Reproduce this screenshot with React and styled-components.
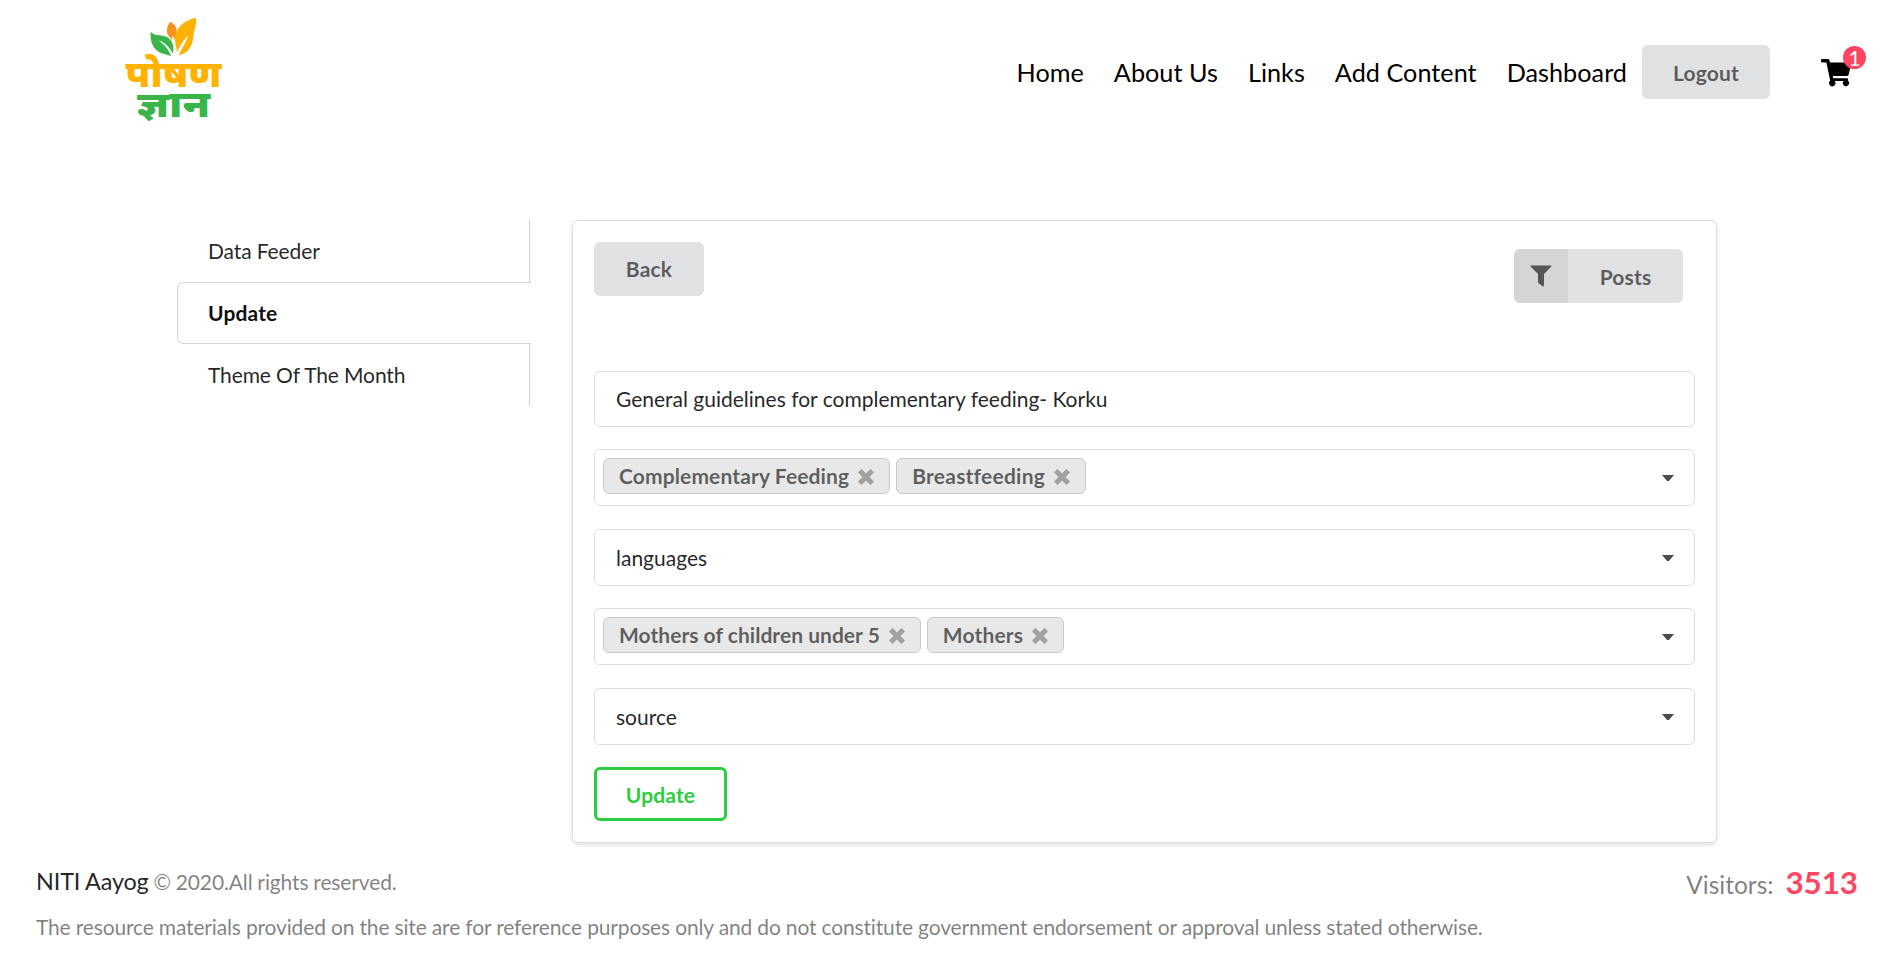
import React from "react";
import styled, { createGlobalStyle } from "styled-components";

const GlobalStyle = createGlobalStyle`
  *, *::before, *::after { box-sizing: border-box; }
  body {
    margin: 0;
    background: #fff;
    color: rgba(0, 0, 0, 0.87);
    font-family: Lato, "Noto Sans", sans-serif;
    font-size: 21px;
    font-variant-ligatures: none;
    line-height: 30px;
  }
`;

const Page = styled.div`
  height: 964px;
  overflow: hidden;
`;

const Header = styled.header`
  display: flex;
  align-items: flex-start;
  justify-content: space-between;
  height: 220px;
  padding: 0 28px 0 125px;
`;

const Logo = styled.svg`
  display: block;
  width: 97px;
  height: 110px;
  margin-top: 14px;
  overflow: visible;
`;

const Nav = styled.nav`
  display: flex;
  align-items: center;
  margin-top: 45px;
  height: 54px;
`;

const NavLink = styled.a`
  color: #000;
  font-size: 25.2px;
  letter-spacing: 0.04px;
  margin-right: ${(p) => (p.$last ? 15 : 30)}px;
  white-space: nowrap;
`;

const Button = styled.button`
  display: inline-flex;
  align-items: center;
  justify-content: center;
  height: 54px;
  width: ${(p) => p.$width}px;
  padding: 0 0 ${(p) => p.$lift || 0}px;
  border: 0;
  border-radius: 6px;
  background: #e0e1e2;
  color: rgba(0, 0, 0, 0.6);
  font: 700 21px/21px Lato, sans-serif;
  letter-spacing: 0.15px;
  overflow: hidden;
`;

const OutlineButton = styled(Button)`
  border: 3px solid #2ecc40;
  background: #fff;
  color: #2ecc40;
`;

const ButtonIcon = styled.span`
  display: flex;
  align-items: center;
  justify-content: center;
  width: 54px;
  height: 54px;
  background: rgba(0, 0, 0, 0.05);
`;

const ButtonLabel = styled.span`
  flex: 1;
  text-align: center;
`;

const FilterIcon = styled.svg`
  width: 22px;
  height: 22px;
  fill: currentColor;
`;

const Cart = styled.div`
  position: relative;
  width: 45px;
  height: 28px;
  margin: 1px 0 0 51px;
  color: #000;
`;

const CartIcon = styled.svg`
  display: block;
  width: 31px;
  height: 28px;
  fill: currentColor;
`;

const Badge = styled.span`
  position: absolute;
  left: 22px;
  top: -13px;
  width: 23px;
  height: 23px;
  border-radius: 50%;
  background: #ff4560;
  color: #fff;
  font-size: 21px;
  line-height: 24px;
  text-align: center;
`;

const Main = styled.main`
  display: flex;
  align-items: flex-start;
  padding-left: 177px;
`;

const Menu = styled.ul`
  width: 353px;
  margin: 0 42px 0 0;
  padding: 0;
  list-style: none;
  border-right: 1px solid #d4d4d5;
`;

const MenuItem = styled.li`
  height: 62px;
  padding-left: 30px;
  border: 1px solid ${(p) => (p.$active ? "#d4d4d5" : "transparent")};
  border-right: 0;
  border-radius: 6px 0 0 6px;
  margin-right: ${(p) => (p.$active ? -2 : 0)}px;
  background: ${(p) => (p.$active ? "#fff" : "none")};
  color: ${(p) => (p.$active ? "rgba(0,0,0,.95)" : "rgba(0,0,0,.87)")};
  font-weight: ${(p) => (p.$active ? 700 : 400)};
  letter-spacing: ${(p) => (p.$active ? 0.15 : -0.12)}px;
  line-height: 59px;
`;

const Card = styled.section`
  width: 1145px;
  height: 623px;
  padding: 21px;
  border: 1px solid rgba(34, 36, 38, 0.15);
  border-radius: 6px;
  box-shadow: 0 2px 4px 0 rgba(34, 36, 38, 0.14);
`;

const CardTop = styled.div`
  display: flex;
  align-items: flex-start;
  justify-content: space-between;
  height: 129px;
  padding-right: 12px;
`;

const PostsSlot = styled.div`
  margin-top: 7px;
`;

const Field = styled.div`
  display: flex;
  align-items: center;
  height: ${(p) => p.$height || 57}px;
  margin-bottom: ${(p) => p.$gap}px;
  padding: 0 20px 0 ${(p) => (p.$tags ? 8 : 21)}px;
  border: 1px solid rgba(34, 36, 38, 0.15);
  border-radius: 6px;
`;

const FieldValue = styled.div`
  display: flex;
  flex: 1;
  gap: 6px;
`;

const Tag = styled.span`
  display: inline-flex;
  align-items: center;
  height: 36px;
  margin-bottom: 3px;
  padding: 0 15px;
  border: 1px solid #c9c9ca;
  border-radius: 6px;
  background: #e8e8e8;
  color: rgba(0, 0, 0, 0.6);
  font-weight: 700;
  letter-spacing: ${(p) => p.$tracking}px;
  line-height: 34px;
`;

const TagClose = styled.svg`
  width: 16px;
  height: 16px;
  margin: 1px 0 0 9px;
  opacity: 0.5;
  stroke: currentColor;
  stroke-width: 4.8;
  stroke-linecap: butt;
`;

const Caret = styled.span`
  width: 12px;
  height: 6px;
  margin-top: 1px;
  background: #4d4d4d;
  clip-path: polygon(0 0, 100% 0, 58% 100%, 42% 100%);
`;

const Footer = styled.footer`
  padding: 22px 36px 0;
  color: rgba(0, 0, 0, 0.5);
  letter-spacing: -0.16px;
`;

const FooterRow = styled.div`
  display: flex;
  justify-content: space-between;
  height: 47px;
`;

const Copyright = styled.div`
  line-height: 32px;
  word-spacing: -0.4px;
  letter-spacing: -0.12px;
`;

const Owner = styled.span`
  color: rgba(0, 0, 0, 0.87);
  font-size: 23.4px;
`;

const Visitors = styled.div`
  font-size: 24.5px;
  letter-spacing: 0;
  line-height: 34px;
`;

const Count = styled.strong`
  margin-left: 12px;
  color: #ff4560;
  font-size: 31.3px;
`;

const LogoText = styled.text`
  font-family: "Noto Sans", "Noto Sans Devanagari", sans-serif;
  font-weight: 900;
`;

function LogoMark() {
  return (
    <Logo viewBox="125 14 97 110" role="img" aria-label="पोषण ज्ञान">
      <g transform="translate(110 5) scale(0.3333)">
        <path d="M257 38C226 45 202 64 196 92C193 112 199 128 202 142C210 119 222 105 235 90C230 111 216 128 207 150C236 145 247 123 250 95C252 73 262 58 257 38Z" fill="#ffb300" />
        <path d="M181 50C172 61 167 77 174 90C178 96 183 100 187 107C186 101 185 96 190 93C192 96 191 101 191 107C198 94 204 79 197 65C193 57 187 54 181 50Z" fill="#f7931e" />
        <path d="M122 80C120 106 127 128 146 140C157 147 169 147 183 153C176 134 164 119 145 106C166 113 178 127 189 146C193 124 188 106 171 96C154 87 138 96 122 80Z" fill="#39b54a" />
      </g>
      <LogoText x="125.500" y="87" textLength="96" lengthAdjust="spacingAndGlyphs" fontSize="36" fill="#ffb300">पोषण</LogoText>
      <LogoText x="137" y="117" textLength="73" lengthAdjust="spacingAndGlyphs" fontSize="36" fill="#39b54a">ज्ञान</LogoText>
    </Logo>
  );
}

const links = ["Home", "About Us", "Links", "Add Content", "Dashboard"];
const sections = ["Data Feeder", "Update", "Theme Of The Month"];
const themes = [
  { label: "Complementary Feeding", tracking: 0.12 },
  { label: "Breastfeeding", tracking: 0.22 },
];
const audiences = [
  { label: "Mothers of children under 5", tracking: 0.03 },
  { label: "Mothers", tracking: 0.14 },
];

function Select({ tags, children, gap }) {
  return (
    <Field $tags={!!tags} $gap={gap}>
      <FieldValue>
        {tags
          ? tags.map((tag) => (
              <Tag key={tag.label} $tracking={tag.tracking}>
                {tag.label}
                <TagClose viewBox="0 0 15 15">
                  <path d="M1.600 1.600L13.400 13.400M13.400 1.600L1.600 13.400" />
                </TagClose>
              </Tag>
            ))
          : children}
      </FieldValue>
      <Caret />
    </Field>
  );
}

export default function App() {
  return (
    <Page>
      <GlobalStyle />
      <Header>
        <LogoMark />
        <Nav>
          {links.map((label, i) => (
            <NavLink key={label} $last={i === links.length - 1}>{label}</NavLink>
          ))}
          <Button $width={128}>Logout</Button>
          <Cart>
            <CartIcon viewBox="0 0 31 28">
              <path d="M1.200 0H7Q8.200 0 8.500 1.200L9 3.500H29Q30.500 3.500 30.100 5L27.700 15.600Q27.400 17 26 17H11.800L12.200 19.200H25.800Q27.300 19.200 27 20.500L26.800 21.500A3.100 3.100 0 1 1 22.600 22H13.500A3.100 3.100 0 1 1 9.200 21.800L5.400 3.400H1.200Q0 3.400 0 2.200V1.200Q0 0 1.200 0Z" />
            </CartIcon>
            <Badge>1</Badge>
          </Cart>
        </Nav>
      </Header>
      <Main>
        <Menu>
          {sections.map((label) => (
            <MenuItem key={label} $active={label === "Update"}>{label}</MenuItem>
          ))}
        </Menu>
        <Card>
          <CardTop>
            <Button $width={110} $lift={2}>Back</Button>
            <PostsSlot>
              <Button $width={169}>
                <ButtonIcon>
                  <FilterIcon viewBox="0 0 22 22">
                    <path d="M1.200 0.500H20.800Q22 0.500 21.200 1.700L14 9V20.500Q13.800 21.800 12.700 21.200L8.600 18.200Q8 17.700 8 17V9L0.800 1.700Q0 0.500 1.200 0.500Z" />
                  </FilterIcon>
                </ButtonIcon>
                <ButtonLabel>Posts</ButtonLabel>
              </Button>
            </PostsSlot>
          </CardTop>
          <Field $height={56} $gap={22}>
            <FieldValue>General guidelines for complementary feeding- Korku</FieldValue>
          </Field>
          <Select tags={themes} gap={23} />
          <Select gap={22}>languages</Select>
          <Select tags={audiences} gap={23} />
          <Select gap={22}>source</Select>
          <OutlineButton $width={133}>Update</OutlineButton>
        </Card>
      </Main>
      <Footer>
        <FooterRow>
          <Copyright><Owner>NITI Aayog</Owner> © 2020.All rights reserved.</Copyright>
          <Visitors>Visitors:<Count>3513</Count></Visitors>
        </FooterRow>
        <div>The resource materials provided on the site are for reference purposes only and do not constitute government endorsement or approval unless stated otherwise.</div>
      </Footer>
    </Page>
  );
}
